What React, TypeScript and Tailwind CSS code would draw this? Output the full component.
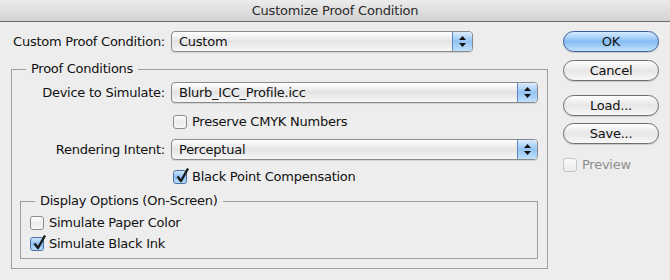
import React from "react";

function Stepper() {
  return (
    <div className="flex w-[20px] flex-col items-center justify-center gap-[3px] border-l border-[#5d86c4] bg-gradient-to-b from-[#dcedfd] via-[#94c4f3] to-[#bfe0fb]">
      <svg width="7" height="4" viewBox="0 0 7 4">
        <path d="M3.5 0 L7 4 L0 4 Z" fill="#111" />
      </svg>
      <svg width="7" height="4" viewBox="0 0 7 4">
        <path d="M0 0 L7 0 L3.5 4 Z" fill="#111" />
      </svg>
    </div>
  );
}

function Select({ value, className }: { value: string; className: string }) {
  return (
    <div
      className={
        "flex h-[21px] overflow-hidden rounded-[4px] border border-[#8a8a8a] bg-gradient-to-b from-white via-[#e4e4e4] to-[#f6f6f6] shadow-[0_1px_1px_rgba(0,0,0,0.12)] " +
        className
      }
    >
      <div className="flex-1 whitespace-nowrap pl-[7px] leading-[19px] text-[#111]">{value}</div>
      <Stepper />
    </div>
  );
}

function Checkbox({ checked, label, dim }: { checked?: boolean; label: string; dim?: boolean }) {
  return (
    <div className="flex h-[14px] items-center whitespace-nowrap">
      <div
        className={
          "relative h-[14px] w-[14px] shrink-0 rounded-[3px] border " +
          (checked
            ? "border-[#4c6fa8] bg-gradient-to-b from-[#cfe6fc] via-[#8dc0f2] to-[#b8dcfb]"
            : dim
            ? "border-[#c4c4c4] bg-gradient-to-b from-[#fafafa] to-[#ececec]"
            : "border-[#8c8c8c] bg-gradient-to-b from-white via-[#ececec] to-[#f7f7f7]")
        }
      >
        {checked && (
          <svg className="absolute left-[1px] top-[-4px]" width="15" height="16" viewBox="0 0 15 16">
            <path d="M2.5 9.5 L6 14 L13 1.5" fill="none" stroke="#1b1b1b" strokeWidth="2.4" strokeLinejoin="round" />
          </svg>
        )}
      </div>
      <span className={"ml-[5px] leading-[14px] " + (dim ? "text-[#8e8e8e]" : "text-[#111]")}>{label}</span>
    </div>
  );
}

function Button({ label, primary }: { label: string; primary?: boolean }) {
  return (
    <div
      className={
        "flex h-[21px] w-[96px] items-center justify-center rounded-full border text-[#111] shadow-[0_1px_1px_rgba(0,0,0,0.15)] " +
        (primary
          ? "border-[#3f5f9c] bg-gradient-to-b from-[#d6ebfd] via-[#86bdf2] to-[#c0e2fc]"
          : "border-[#6f6f6f] bg-gradient-to-b from-white via-[#e6e6e6] to-[#f8f8f8]")
      }
    >
      {label}
    </div>
  );
}

function Label({ text, className }: { text: string; className: string }) {
  return <div className={"flex justify-end whitespace-nowrap " + className}>{text}</div>;
}

export default function App() {
  return (
    <div className="h-[280px] w-[670px] overflow-hidden bg-[#ededed] font-['DejaVu_Sans',sans-serif] text-[13px] tracking-[-0.25px] text-[#111]">
      <div className="flex h-[22px] items-center justify-center border-b border-[#6a6a6a] bg-gradient-to-b from-[#ececec] to-[#d2d2d2] tracking-[-0.2px] text-[#2a2a2a]">
        Customize Proof Condition
      </div>

      <div className="flex">
        <div className="w-[552px] pl-[10px] pt-[9px]">
          <div className="flex h-[21px] items-center">
            <Label text="Custom Proof Condition:" className="w-[155px]" />
            <Select value="Custom" className="ml-[6px] w-[302px]" />
          </div>

          <fieldset className="ml-[1px] mt-[9px] w-[537px] border border-[#9d9d9d] pb-[9px]">
            <legend className="ml-[14px] px-[5px] leading-[16px]">Proof Conditions</legend>
            <div className="flex flex-col pt-[5px]">
              <div className="flex h-[21px] items-center">
                <Label text="Device to Simulate:" className="w-[153px]" />
                <Select value="Blurb_ICC_Profile.icc" className="ml-[6px] w-[367px]" />
              </div>
              <div className="mt-[12px] pl-[161px]">
                <Checkbox label="Preserve CMYK Numbers" />
              </div>
              <div className="mt-[10px] flex h-[21px] items-center">
                <Label text="Rendering Intent:" className="w-[153px]" />
                <Select value="Perceptual" className="ml-[6px] w-[367px]" />
              </div>
              <div className="mt-[10px] pl-[161px]">
                <Checkbox checked label="Black Point Compensation" />
              </div>

              <fieldset className="ml-[8px] mt-[9px] w-[518px] border border-[#9d9d9d] pb-[7px] pl-[9px]">
                <legend className="ml-[5px] px-[5px] leading-[16px]">Display Options (On-Screen)</legend>
                <div className="mt-[7px]">
                  <Checkbox label="Simulate Paper Color" />
                </div>
                <div className="mt-[7px]">
                  <Checkbox checked label="Simulate Black Ink" />
                </div>
              </fieldset>
            </div>
          </fieldset>
        </div>

        <div className="ml-[11px] flex flex-col pt-[9px]">
          <Button label="OK" primary />
          <div className="mt-[8px]">
            <Button label="Cancel" />
          </div>
          <div className="mt-[14px]">
            <Button label="Load..." />
          </div>
          <div className="mt-[7px]">
            <Button label="Save..." />
          </div>
          <div className="mt-[14px]">
            <Checkbox dim label="Preview" />
          </div>
        </div>
      </div>
    </div>
  );
}
